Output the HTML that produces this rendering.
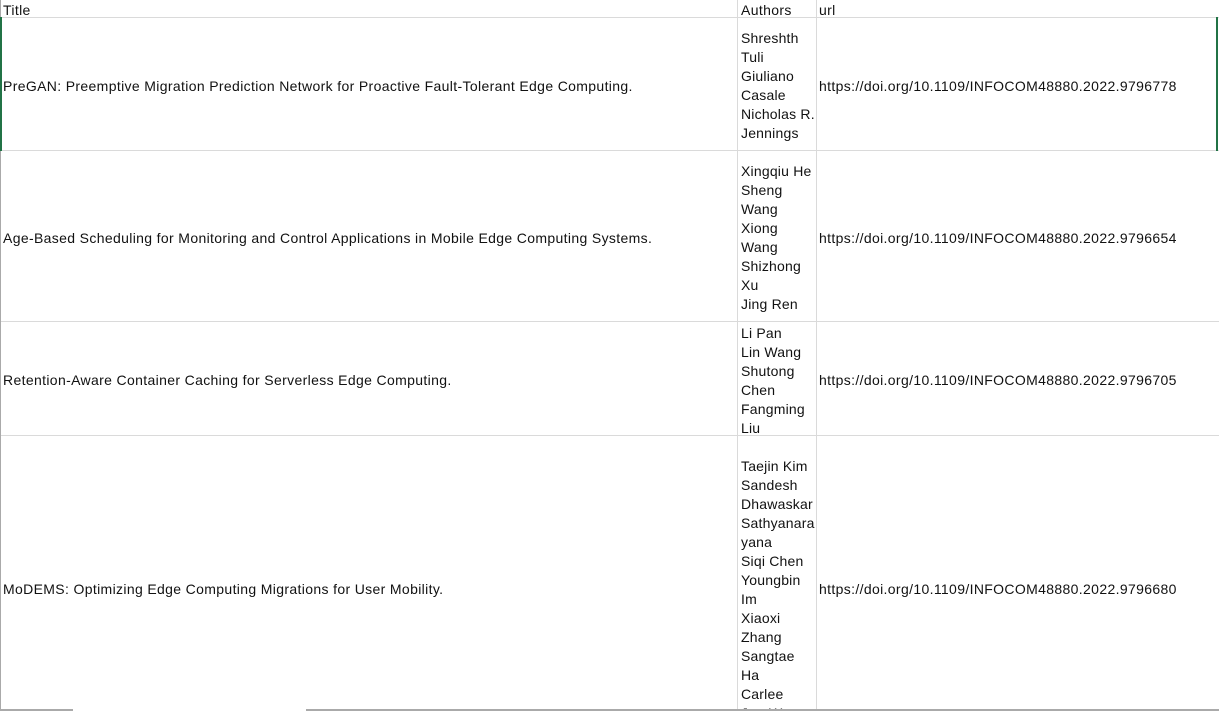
<!DOCTYPE html>
<html><head><meta charset="utf-8"><style>
body{margin:0;width:1219px;height:711px;overflow:hidden;background:#fff;font-family:"Liberation Sans","Noto Sans CJK SC",sans-serif;font-size:14px;color:#111;position:relative;letter-spacing:0.35px}
.h{position:absolute;height:1px;background:#dadada}
.v{position:absolute;width:1px;background:#dadada}
.t{position:absolute;white-space:nowrap;line-height:19px}
.c{position:absolute;line-height:19px;left:741px;width:75px;overflow:hidden;letter-spacing:0.2px;white-space:nowrap}
</style></head><body>
<div class="t" style="left:3px;top:1px">Title</div>
<div class="t" style="left:741px;top:1px">Authors</div>
<div class="t" style="left:819px;top:1px">url</div>
<div class="h" style="left:0;width:1219px;top:17px"></div>
<div class="h" style="left:0;width:1219px;top:150px"></div>
<div class="h" style="left:0;width:1219px;top:321px"></div>
<div class="h" style="left:0;width:1219px;top:435px"></div>
<div class="v" style="left:737px;top:0;height:711px"></div>
<div class="v" style="left:816px;top:0;height:711px"></div>
<div style="position:absolute;left:0;top:0;width:1px;height:711px;background:#aaa"></div>
<div style="position:absolute;left:0;top:17px;width:2px;height:134px;background:#217346"></div>
<div style="position:absolute;left:1216px;top:17px;width:2px;height:134px;background:#217346"></div>
<div style="position:absolute;left:0;top:709px;width:73px;height:2px;background:#aaa"></div>
<div style="position:absolute;left:306px;top:709px;width:913px;height:2px;background:#aaa"></div>

<div class="t" style="left:3px;top:77px">PreGAN: Preemptive Migration Prediction Network for Proactive Fault-Tolerant Edge Computing.</div>
<div class="c" style="top:29px">Shreshth<br>Tuli<br>Giuliano<br>Casale<br>Nicholas R.<br>Jennings</div>
<div class="t" style="left:819px;top:77px">https://doi.org/10.1109/INFOCOM48880.2022.9796778</div>

<div class="t" style="left:3px;top:229px">Age-Based Scheduling for Monitoring and Control Applications in Mobile Edge Computing Systems.</div>
<div class="c" style="top:162px">Xingqiu He<br>Sheng<br>Wang<br>Xiong<br>Wang<br>Shizhong<br>Xu<br>Jing Ren</div>
<div class="t" style="left:819px;top:229px">https://doi.org/10.1109/INFOCOM48880.2022.9796654</div>

<div class="t" style="left:3px;top:371px">Retention-Aware Container Caching for Serverless Edge Computing.</div>
<div class="c" style="top:324px">Li Pan<br>Lin Wang<br>Shutong<br>Chen<br>Fangming<br>Liu</div>
<div class="t" style="left:819px;top:371px">https://doi.org/10.1109/INFOCOM48880.2022.9796705</div>

<div class="t" style="left:3px;top:580px">MoDEMS: Optimizing Edge Computing Migrations for User Mobility.</div>
<div class="c" style="top:457px;height:252px">Taejin Kim<br>Sandesh<br>Dhawaskar<br>Sathyanara<br>yana<br>Siqi Chen<br>Youngbin<br>Im<br>Xiaoxi<br>Zhang<br>Sangtae<br>Ha<br>Carlee<br>Joe-Wong</div>
<div class="t" style="left:819px;top:580px">https://doi.org/10.1109/INFOCOM48880.2022.9796680</div>
</body></html>
